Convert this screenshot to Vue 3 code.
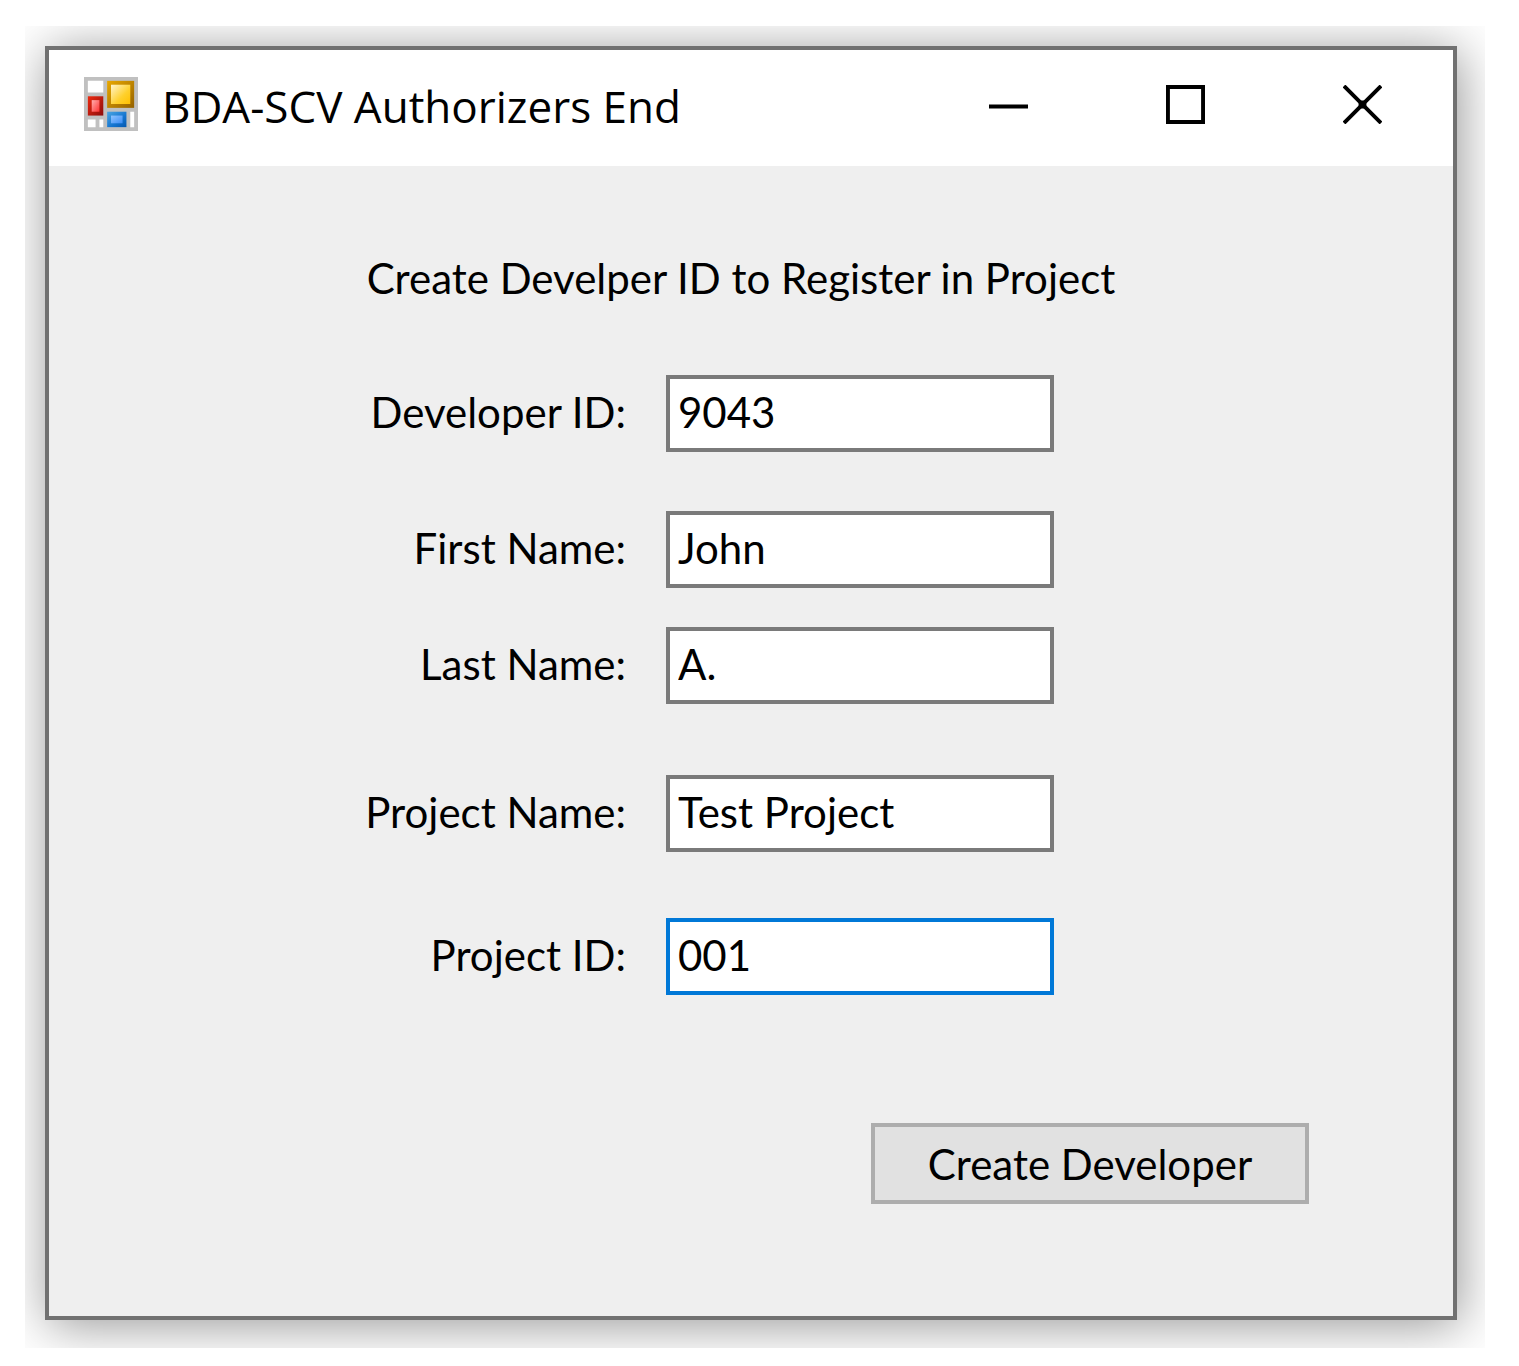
<template>
  <main class="desktop">
    <div class="backdrop">
      <section class="window">
        <header class="title-bar">
          <svg class="app-icon" viewBox="0 0 14 14" aria-hidden="true">
            <defs>
              <linearGradient id="gold-edge" x1="0" y1="0" x2="1" y2="1">
                <stop offset="0" stop-color="#e9a800" />
                <stop offset="1" stop-color="#946100" />
              </linearGradient>
              <linearGradient id="gold" x1="0" y1="0" x2="1" y2="1">
                <stop offset="0" stop-color="#fff3cd" />
                <stop offset="0.6" stop-color="#ffd02c" />
                <stop offset="1" stop-color="#ffc000" />
              </linearGradient>
              <linearGradient id="red-edge" x1="0" y1="0" x2="1" y2="1">
                <stop offset="0" stop-color="#ee2a10" />
                <stop offset="1" stop-color="#8c0c0c" />
              </linearGradient>
              <linearGradient id="red" x1="0" y1="0" x2="1" y2="1">
                <stop offset="0" stop-color="#ffb0b0" />
                <stop offset="1" stop-color="#ff3030" />
              </linearGradient>
              <linearGradient id="blue-edge" x1="0" y1="0" x2="1" y2="1">
                <stop offset="0" stop-color="#4aa5e2" />
                <stop offset="0.6" stop-color="#1474cf" />
                <stop offset="1" stop-color="#0558b0" />
              </linearGradient>
              <linearGradient id="blue" x1="0" y1="0" x2="1" y2="1">
                <stop offset="0" stop-color="#8fc4ff" />
                <stop offset="1" stop-color="#3a8cf5" />
              </linearGradient>
            </defs>
            <rect width="14" height="14" fill="#c0c0c0" />
            <path fill="#fff" d="M1 1h4v3H1zM1 11h2v2H1zM4 11h1v2H4zM12 9h1v4h-1z" />
            <rect x="6" y="1" width="7" height="7" fill="url(#gold-edge)" />
            <rect x="7" y="2" width="5" height="5" fill="url(#gold)" />
            <rect x="1" y="5" width="4" height="5" fill="url(#red-edge)" />
            <rect x="2" y="6" width="2" height="3" fill="url(#red)" />
            <rect x="6" y="9" width="5" height="4" fill="url(#blue-edge)" />
            <rect x="7" y="10" width="3" height="2" fill="url(#blue)" />
          </svg>
          <h1 class="title">BDA-SCV Authorizers End</h1>
          <button type="button" class="caption-button" aria-label="Minimize">
            <svg viewBox="0 0 40 40"><path d="M0 22h40" stroke-width="4" /></svg>
          </button>
          <button type="button" class="caption-button" aria-label="Maximize">
            <svg viewBox="0 0 40 40"><path d="M2 2h36v36H2z" stroke-width="4" /></svg>
          </button>
          <button type="button" class="caption-button" aria-label="Close">
            <svg viewBox="0 0 40 40">
              <path d="M1 1l38 38M39 1L1 39" stroke-width="4" />
              <path d="M16 20h8M20 16v8" stroke-width="8" />
            </svg>
          </button>
        </header>

        <form class="client" @submit.prevent>
          <h2 class="heading">Create Develper ID to Register in Project</h2>
          <div
            v-for="field in fields"
            :key="field.id"
            class="row"
            :class="field.spacing"
          >
            <label :for="field.id">{{ field.label }}</label>
            <input
              :id="field.id"
              v-model="field.value"
              type="text"
              :class="{ active: activeField === field.id }"
              @focus="activeField = field.id"
            />
          </div>
          <button type="submit" class="create-button">Create Developer</button>
        </form>
      </section>
    </div>
  </main>
</template>

<script setup>
import { ref } from 'vue'

const activeField = ref('project-id')

const fields = ref([
  { id: 'developer-id', label: 'Developer ID:', value: '9043', spacing: 'gap-large' },
  { id: 'first-name', label: 'First Name:', value: 'John', spacing: 'gap-medium' },
  { id: 'last-name', label: 'Last Name:', value: 'A.', spacing: 'gap-small' },
  { id: 'project-name', label: 'Project Name:', value: 'Test Project', spacing: 'gap-large' },
  { id: 'project-id', label: 'Project ID:', value: '001', spacing: 'gap-wide' }
])
</script>

<style>
body {
  margin: 0;
  background: #fff;
}
</style>

<style scoped>
.desktop {
  padding: 26px 34px 18px 25px;
}

.backdrop {
  padding: 20px 28px 28px 20px;
  overflow: hidden;
}

.window {
  border: 4px solid #717171;
  background: #efefef;
  box-shadow: 3px 5px 48px rgba(0, 0, 0, 0.42);
  color: #000;
  font-family: Lato, sans-serif;
  font-size: 42px;
  line-height: 52px;
}

.title-bar {
  display: flex;
  align-items: center;
  box-sizing: border-box;
  height: 116px;
  padding: 0 2px 8px 35px;
  background: #fff;
}

.app-icon {
  flex: none;
  width: 54px;
  height: 54px;
  margin-right: 24px;
}

.title {
  flex: 1;
  margin: 0;
  padding-top: 4px;
  font-family: "Open Sans", sans-serif;
  font-size: 44px;
  font-weight: 400;
  white-space: nowrap;
}

.caption-button {
  display: flex;
  align-items: center;
  justify-content: center;
  width: 177px;
  height: 100%;
  padding: 0;
  border: 0;
  background: transparent;
}

.caption-button svg {
  width: 39px;
  height: 39px;
  fill: none;
  stroke: #000;
}

.client {
  display: flex;
  flex-direction: column;
  padding: 86px 0 112px;
}

.heading {
  margin: 0;
  padding-right: 20px;
  font-size: 42px;
  font-weight: 400;
  text-align: center;
}

.row {
  display: grid;
  grid-template-columns: 577fr 388fr 359fr;
  column-gap: 40px;
  align-items: center;
}

.gap-small {
  margin-top: 39px;
}

.gap-medium {
  margin-top: 59px;
}

.gap-wide {
  margin-top: 66px;
}

.gap-large {
  margin-top: 71px;
}

.row label {
  padding-bottom: 4px;
  text-align: right;
}

.row input {
  box-sizing: border-box;
  width: 100%;
  height: 77px;
  padding: 0 8px 4px;
  border: 4px solid #7a7a7a;
  border-radius: 0;
  outline: 0;
  background: #fff;
  color: #000;
  font: inherit;
}

.row input.active {
  border-color: #0078d7;
}

.create-button {
  align-self: flex-end;
  box-sizing: border-box;
  width: 438px;
  height: 81px;
  margin: 128px 144px 0 0;
  padding: 0;
  border: 4px solid #adadad;
  background: #e1e1e1;
  color: #000;
  font: inherit;
}
</style>
